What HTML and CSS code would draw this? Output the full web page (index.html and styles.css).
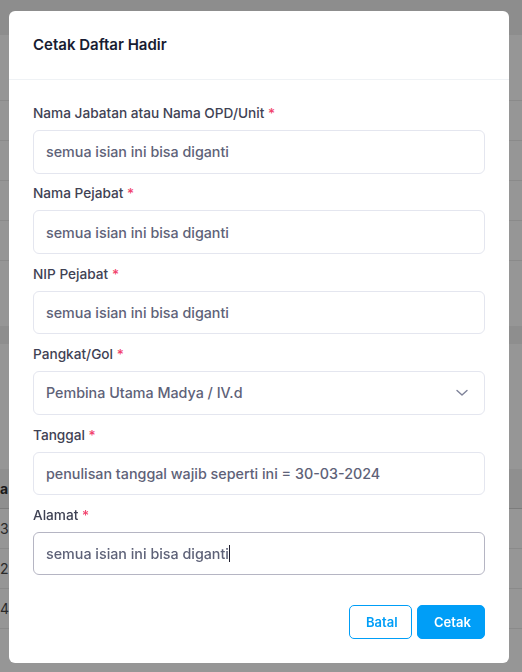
FILE: index.html
```html
<!DOCTYPE html>
<html lang="id">
<head>
<meta charset="utf-8">
<title>Cetak Daftar Hadir</title>
<link rel="stylesheet" href="styles.css">
</head>
<body>
<div class="page">
  <div class="topbar"></div>
  <div class="card">
    <div class="card-head"></div>
    <div class="row"></div>
    <div class="row"></div>
    <div class="row"></div>
    <div class="row"></div>
    <div class="card-foot"></div>
  </div>
  <div class="gap"></div>
  <div class="card2">
    <div class="card2-head"></div>
    <div class="thead">a</div>
    <div class="trow">3</div>
    <div class="trow">2</div>
    <div class="trow">4</div>
    <div class="card2-foot"></div>
  </div>
  <div class="bottom"></div>
</div>

<div class="modal" role="dialog">
  <div class="modal-header">
    <h5 class="modal-title">Cetak Daftar Hadir</h5>
  </div>
  <div class="modal-body">
    <div class="field">
      <label class="form-label">Nama Jabatan atau Nama OPD/Unit <span class="req">*</span></label>
      <input class="form-control" type="text" value="semua isian ini bisa diganti">
    </div>
    <div class="field">
      <label class="form-label">Nama Pejabat <span class="req">*</span></label>
      <input class="form-control" type="text" value="semua isian ini bisa diganti">
    </div>
    <div class="field">
      <label class="form-label">NIP Pejabat <span class="req">*</span></label>
      <input class="form-control" type="text" value="semua isian ini bisa diganti">
    </div>
    <div class="field">
      <label class="form-label">Pangkat/Gol <span class="req">*</span></label>
      <div class="form-select">
        <span>Pembina Utama Madya / IV.d</span>
        <svg class="chev" width="12" height="8" viewBox="0 0 12 8"><path d="M1 1.5 L6 6 L11 1.5" fill="none" stroke="#7e8299" stroke-width="1.4" stroke-linecap="round" stroke-linejoin="round"/></svg>
      </div>
    </div>
    <div class="field">
      <label class="form-label">Tanggal <span class="req">*</span></label>
      <input class="form-control" type="text" value="penulisan tanggal wajib seperti ini = 30-03-2024">
    </div>
    <div class="field">
      <label class="form-label">Alamat <span class="req">*</span></label>
      <div class="form-control focus"><span>semua isian ini bisa diganti</span><span class="caret"></span></div>
    </div>
  </div>
  <div class="modal-footer">
    <button class="btn btn-outline" type="button">Batal</button>
    <button class="btn btn-primary" type="button">Cetak</button>
  </div>
</div>
</body>
</html>
```

FILE: styles.css
```css
* { box-sizing: border-box; }
html, body { margin: 0; padding: 0; }
body {
  font-family: Inter, "Noto Sans", "Liberation Sans", sans-serif;
  background: #969696;
  overflow: hidden;
  height: 672px;
}

/* background page (dimmed by backdrop) */
.page { display: flex; flex-direction: column; }
.topbar { height: 35px; background: #8d8d8d; }
.card { display: flex; flex-direction: column; }
.card-head { height: 66px; border-bottom: 1px solid #8a8a8a; }
.row { height: 40px; border-bottom: 1px solid #8a8a8a; }
.card-foot { height: 65px; }
.gap { height: 18px; background: #8e8e8e; }
.card2 { display: flex; flex-direction: column; }
.card2-head { height: 125px; }
.thead {
  height: 40px; background: #8f8f8f; border-bottom: 1px solid #7c7c7c;
  font-weight: 700; font-size: 14px; color: #1a1a1a;
  display: flex; align-items: center;
}
.trow {
  height: 40px; border-bottom: 1px solid #8a8a8a;
  font-size: 14px; color: #2a2a2a;
  display: flex; align-items: center;
}
.trow:last-child { border-bottom: 0; }
.card2-foot { height: 32px; }
.bottom { flex: 1; height: 20px; background: #8b8b8b; }

/* modal */
.modal {
  position: fixed;
  top: 11px; left: 9px;
  width: 500px;
  background: #ffffff;
  border-radius: 6px;
  display: flex; flex-direction: column;
}
.modal-header {
  padding: 25px 24px;
  border-bottom: 1px solid #eff2f5;
}
.modal-title {
  margin: 0;
  font-size: 15px; line-height: 18px;
  font-weight: 600;
  color: #181c32;
}
.modal-body {
  padding: 24px 24px 0;
  display: flex; flex-direction: column; gap: 10.9px;
}
.field { display: flex; flex-direction: column; }
.form-label {
  font-size: 13.65px; line-height: 19px;
  font-weight: 500; color: #3f4254;
  margin-bottom: 7px;
}
.req { color: #f1416c; }
.form-control, .form-select {
  height: 43.5px;
  width: 100%;
  border: 1px solid #e4e6ef;
  border-radius: 6px;
  padding: 0 12px;
  font-family: inherit;
  font-size: 14.3px;
  font-weight: 500;
  color: #5e6278;
  background: #fff;
  outline: none;
  display: flex; align-items: center;
}
.form-select { justify-content: space-between; padding-right: 16px; }
.chev { display: block; }
.form-control.focus { border-color: #b5b5c3; }
.caret {
  display: inline-block; width: 1px; height: 17px;
  background: #1e1e2d;
}
.modal-footer {
  display: flex; justify-content: flex-end; gap: 5px;
  padding: 29.5px 24px 24px;
}
.btn {
  font-family: inherit;
  font-size: 13px; font-weight: 600;
  height: 34.5px;
  border-radius: 5px;
  cursor: pointer;
  padding: 0 16px;
}
.btn-outline {
  width: 63px;
  background: #fff; color: #009ef7;
  border: 1px solid #009ef7;
}
.btn-primary {
  width: 68px;
  background: #009ef7; color: #fff;
  border: 1px solid #009ef7;
}
```
